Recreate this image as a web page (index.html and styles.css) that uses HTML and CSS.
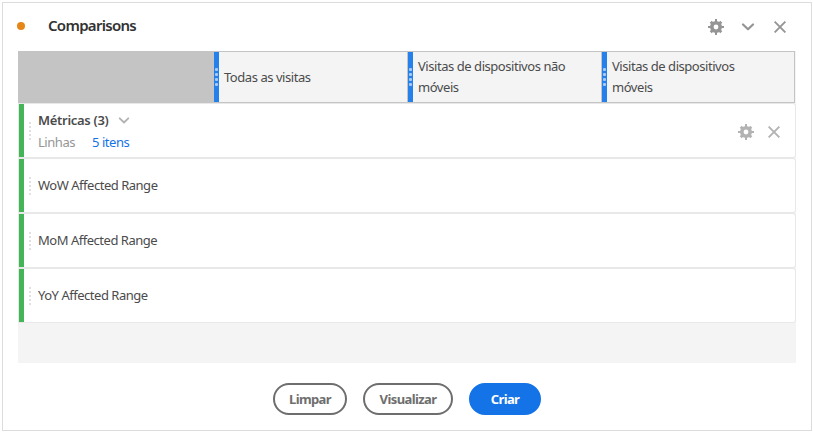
FILE: index.html
```html
<!DOCTYPE html>
<html lang="pt-BR">
<head>
<meta charset="utf-8">
<title>Comparisons</title>
<link rel="stylesheet" href="styles.css">
</head>
<body>
<svg class="defs" width="0" height="0" aria-hidden="true">
  <symbol id="gear" viewBox="0 0 16 16">
    <path fill="none" stroke="currentColor" stroke-width="2" d="M8 0v3M8 13v3M0 8h3M13 8h3"/>
    <path fill="none" stroke="currentColor" stroke-width="2.800" d="M2.700 2.700l2 2M11.300 11.300l2 2M13.300 2.700l-2 2M4.700 11.300l-2 2"/>
    <circle cx="8" cy="8" r="4.200" fill="none" stroke="currentColor" stroke-width="3.600"/>
  </symbol>
  <symbol id="chevron" viewBox="0 0 14 8">
    <path fill="none" stroke="currentColor" stroke-width="2.200" stroke-linecap="round" stroke-linejoin="round" d="M2 1.500L7 6.300l5-4.800"/>
  </symbol>
  <symbol id="cross" viewBox="0 0 12 12">
    <path fill="none" stroke="currentColor" stroke-width="1.900" d="M.6.6l10.800 10.800M11.400.6L.6 11.400"/>
  </symbol>
</svg>
<main class="panel">
  <header class="title-bar">
    <i class="status"></i>
    <h1 class="title">Comparisons</h1>
    <svg class="gear"><use href="#gear"/></svg>
    <svg class="chevron"><use href="#chevron"/></svg>
    <svg class="cross"><use href="#cross"/></svg>
  </header>
  <section class="table">
    <div class="columns">
      <div class="corner"></div>
      <div class="column"><i class="handle"></i><span class="label">Todas as visitas</span></div>
      <div class="column"><i class="handle"></i><span class="label">Visitas de dispositivos não<br>móveis</span></div>
      <div class="column"><i class="handle"></i><span class="label">Visitas de dispositivos<br>móveis</span></div>
    </div>
    <div class="row">
      <i class="grip"></i>
      <div class="metrics">
        <div class="metrics-head"><b>Métricas (3)</b><svg class="chevron small"><use href="#chevron"/></svg></div>
        <div class="metrics-sub"><span class="lines">Linhas</span><a class="items">5 itens</a></div>
      </div>
      <div class="row-tools">
        <svg class="gear"><use href="#gear"/></svg>
        <svg class="cross"><use href="#cross"/></svg>
      </div>
    </div>
    <div class="row"><i class="grip"></i><span class="range">WoW Affected Range</span></div>
    <div class="row"><i class="grip"></i><span class="range">MoM Affected Range</span></div>
    <div class="row"><i class="grip"></i><span class="range">YoY Affected Range</span></div>
  </section>
  <footer class="actions">
    <button class="button clear">Limpar</button>
    <button class="button preview">Visualizar</button>
    <button class="button create">Criar</button>
  </footer>
</main>
</body>
</html>
```

FILE: styles.css
```css
* { box-sizing: border-box; }
body {
  margin: 0;
  padding: 2px 1px 1px 2px;
  background: #fff;
  color: #4b4b4b;
  font: 13px/21px "Noto Sans", "Open Sans", sans-serif;
  letter-spacing: -0.45px;
}
svg { display: block; flex: none; }
.defs { position: absolute; }
.panel {
  width: 810px;
  height: 429px;
  padding: 0 15px;
  border: 1px solid #dcdcdc;
}
.title-bar {
  display: flex;
  align-items: center;
  height: 48px;
  padding-right: 10px;
  color: #959595;
}
.status {
  width: 8px;
  height: 8px;
  margin: 0 22.5px 3px -1.5px;
  border-radius: 50%;
  background: #e68619;
}
.title {
  margin: 0 auto 3px 1px;
  color: #323232;
  font-size: 15px;
  font-weight: 600;
  letter-spacing: -0.7px;
}
.gear { width: 16px; height: 16px; }
.chevron { width: 14px; height: 8px; margin: 0 19px 0 17px; }
.cross { width: 12px; height: 12px; }
.table {
  height: 312px;
  background: #f4f4f4;
}
.columns {
  display: flex;
  width: 777px;
  height: 52px;
  border: 1px solid #c4c4c4;
}
.corner { width: 194px; background: #c4c4c4; }
.column {
  display: flex;
  align-items: center;
  width: 194px;
  border-left: 1px solid #c4c4c4;
}
.column:last-child { width: 193px; }
.handle {
  width: 5px;
  height: 50px;
  margin-right: 5px;
  padding: 16px 1px 14px;
  background: radial-gradient(circle at 1.5px 1.5px, #a8cbf8 1.300px, transparent 1.700px) 0 0 / 3px 5px repeat-y content-box content-box, #2680eb;
}
.label { white-space: nowrap; }
.row {
  display: flex;
  align-items: center;
  height: 55px;
  padding-right: 15px;
  border: 1px solid #e8e8e8;
  border-radius: 0 3px 3px 0;
  background: linear-gradient(90deg, #44b556 5px, #fff 5px);
}
.range { letter-spacing: -0.48px; }
.grip {
  width: 2px;
  height: 18px;
  margin: 0 7px 0 10px;
  background: repeating-linear-gradient(#e1e1e1 0 2px, transparent 2px 4px);
}
.metrics { padding-top: 2px; }
.metrics-head, .metrics-sub { display: flex; align-items: center; height: 22px; }
.metrics-head b { letter-spacing: -0.3px; font-weight: 600; }
.chevron.small { width: 12px; height: 7px; margin: 0 0 0 9.5px; color: #b3b3b3; }
.lines { width: 54px; color: #959595; }
.items { color: #1473e6; }
.row-tools {
  display: flex;
  align-items: center;
  gap: 14px;
  margin: 2px 0 0 auto;
  color: #b3b3b3;
}
.actions {
  display: flex;
  justify-content: center;
  gap: 16px;
  margin-top: 20px;
  padding-right: 1px;
}
.button {
  height: 32px;
  padding: 0 0 0 1px;
  border: 2px solid #6e6e6e;
  border-radius: 16px;
  background: #fff;
  color: #6e6e6e;
  font: 700 13px/20px "Noto Sans", sans-serif;
  letter-spacing: -0.6px;
}
.clear { width: 74px; }
.preview { width: 90px; }
.create { width: 72px; border-color: #1473e6; background: #1473e6; color: #fff; }
```
